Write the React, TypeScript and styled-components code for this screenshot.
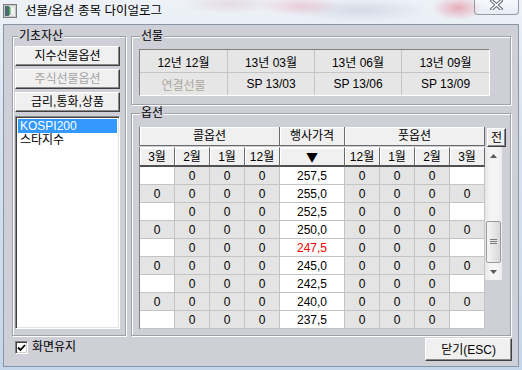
import styled, { createGlobalStyle } from "styled-components";

const FONT = `"Liberation Sans", "Noto Sans CJK KR", sans-serif`;
const FACE = "#cfcfd7";
const BUTTON_FACE = "#f0f0f0";

const GlobalStyle = createGlobalStyle`
  html, body {
    margin: 0;
    padding: 0;
  }
  body {
    width: 522px;
    height: 370px;
    overflow: hidden;
    font-family: ${FONT};
    font-size: 12px;
    color: #000;
  }
`;

const Window = styled.div`
  width: 522px;
  height: 370px;
  box-sizing: border-box;
  display: flex;
  flex-direction: column;
  padding: 0 3px 3px 3px;
  background:
    radial-gradient(ellipse 26px 12px at 458px 8px, rgba(225, 90, 110, 0.45), transparent),
    radial-gradient(ellipse 40px 10px at 300px 6px, rgba(230, 120, 140, 0.3), transparent),
    radial-gradient(ellipse 70px 12px at 360px 10px, rgba(140, 150, 175, 0.25), transparent),
    radial-gradient(ellipse 50px 10px at 230px 4px, rgba(200, 150, 170, 0.25), transparent),
    linear-gradient(#eef2f8, #dae4f0 30%, #c6d6ea);
`;

const TitleBar = styled.div`
  height: 24px;
  display: flex;
  align-items: flex-start;
`;

const AppIcon = styled.svg`
  margin-top: 4px;
  flex: none;
`;

const TitleText = styled.span`
  margin-left: 8px;
  line-height: 23px;
  font-size: 12.5px;
  color: #000;
`;

const CloseButton = styled.div`
  margin-left: auto;
  width: 45px;
  height: 15px;
  box-sizing: border-box;
  border: 1px solid rgba(70, 80, 100, 0.55);
  border-top: none;
  border-radius: 0 0 4px 4px;
  background: linear-gradient(rgba(255, 255, 255, 0.55), rgba(225, 232, 242, 0.35));
  display: flex;
  justify-content: center;
  align-items: flex-start;
`;

const Client = styled.div`
  flex: 1;
  display: flex;
  flex-direction: column;
  background: ${FACE};
  border: 1px solid #8a96a6;
  padding: 11px 6px 0 8px;
`;

const MainRow = styled.div`
  display: flex;
  gap: 5px;
  height: 300px;
`;

const GroupBox = styled.div`
  position: relative;
  box-sizing: border-box;
  border: 1px solid #a0a0a8;
  box-shadow: inset 1px 1px 0 #fff, 1px 1px 0 #fff;
`;

const GroupTitle = styled.span<{ $left: number }>`
  position: absolute;
  top: -8px;
  left: ${(p) => p.$left}px;
  padding: 0 1px;
  background: ${FACE};
  line-height: 14px;
`;

const AssetGroup = styled(GroupBox)`
  width: 114px;
  display: flex;
  flex-direction: column;
  gap: 3px;
  padding: 9px 5px 6px 2px;
`;

const RightColumn = styled.div`
  width: 380px;
  display: flex;
  flex-direction: column;
  gap: 8px;
`;

const FuturesGroup = styled(GroupBox)`
  height: 69px;
  padding: 12px 0 0 7px;
`;

const OptionsGroup = styled(GroupBox)`
  flex: 1;
  padding: 13px 0 0 7px;
`;

const PushButton = styled.button<{ $dim?: boolean; $w?: number; $h?: number }>`
  width: ${(p) => (p.$w ? `${p.$w}px` : "100%")};
  height: ${(p) => p.$h ?? 20}px;
  box-sizing: border-box;
  padding: 0;
  font-family: ${FONT};
  font-size: 12px;
  line-height: 16px;
  background: ${BUTTON_FACE};
  border: 1px solid;
  border-color: #fff #404040 #404040 #fff;
  box-shadow: inset -1px -1px 0 #8a8a8a;
  color: ${(p) => (p.$dim ? "#a4a4a4" : "#000")};
`;

const ListBox = styled.div`
  flex: 1;
  margin-top: 1px;
  background: #fff;
  border: 1px solid;
  border-color: #8a8a8a #fff #fff #8a8a8a;
  box-shadow: inset 1px 1px 0 #404040, inset -1px -1px 0 #e4e4e4;
  padding: 2px;
`;

const ListItem = styled.div<{ $selected?: boolean }>`
  height: 14px;
  line-height: 14px;
  padding-left: 2px;
  background: ${(p) => (p.$selected ? "#3399ff" : "transparent")};
  color: ${(p) => (p.$selected ? "#fff" : "#000")};
`;

const FuturesTable = styled.div`
  display: inline-grid;
  grid-template-columns: 87px 86px 86px 87px;
  grid-auto-rows: 22px;
  gap: 1px;
  background: #c4c4c4;
  border: 1px solid;
  border-color: #808080 #fff #fff #808080;
`;

const FuturesCell = styled.div<{ $muted?: boolean }>`
  background: #e6e6e6;
  display: flex;
  align-items: center;
  justify-content: center;
  color: ${(p) => (p.$muted ? "#aaa69c" : "#000")};
`;

const OptionsArea = styled.div`
  display: flex;
  flex-direction: column;
`;

const AreaRow = styled.div`
  display: flex;
  align-items: flex-start;
`;

const OptionGrid = styled.div<{ $top?: boolean }>`
  display: grid;
  grid-template-columns: ${(p) =>
    p.$top ? "140px 65px 140px" : "repeat(4, 35px) 65px repeat(4, 35px)"};
  border-left: 1px solid #808080;
`;

const HeadCell = styled.div<{ $second?: boolean }>`
  box-sizing: border-box;
  height: ${(p) => (p.$second ? 20 : 19)}px;
  background: ${BUTTON_FACE};
  border-right: 1px solid #6a6a6a;
  border-top: ${(p) => (p.$second ? "1px solid #fafafa" : "none")};
  border-bottom: ${(p) => (p.$second ? "2px solid #505050" : "1px solid #6a6a6a")};
  box-shadow: inset 1px 1px 0 #fff;
  display: flex;
  align-items: center;
  justify-content: center;
  line-height: 14px;
`;

const SortMark = styled.span`
  font-family: "Noto Sans CJK KR", sans-serif;
  font-size: 12px;
  line-height: 14px;
`;

const DataCell = styled.div<{ $fill: boolean; $red?: boolean }>`
  box-sizing: border-box;
  height: 18px;
  background: ${(p) => (p.$fill ? "#e4e4e4" : "#fff")};
  border-right: 1px solid #c4c4c4;
  border-bottom: 1px solid #c4c4c4;
  display: flex;
  align-items: center;
  justify-content: center;
  color: ${(p) => (p.$red ? "#ff0000" : "#000")};
  line-height: 14px;
`;

const AllButton = styled(PushButton)`
  margin: 1px 0 0 2px;
  width: 19px;
  height: 19px;
  line-height: 14px;
`;

const ScrollBar = styled.div`
  width: 17px;
  display: flex;
  flex-direction: column;
  background: linear-gradient(to right, #e6e6e9, #f4f4f5 30%, #f4f4f5 70%, #ececee);
`;

const ScrollArrow = styled.div`
  height: 17px;
  display: flex;
  align-items: center;
  justify-content: center;
`;

const ScrollTrack = styled.div`
  flex: 1;
`;

const ScrollThumb = styled.div`
  margin: 0 auto;
  width: 15px;
  height: 42px;
  box-sizing: border-box;
  border: 1px solid #9a9a9e;
  border-radius: 2px;
  background: linear-gradient(to right, #f6f6f6, #e8e8e8 50%, #d8d8da);
  display: flex;
  align-items: center;
  justify-content: center;
`;

const Footer = styled.div`
  flex: 1;
  display: flex;
  align-items: flex-start;
  padding: 2px 0 0 3px;
`;

const CheckLabel = styled.label`
  display: flex;
  align-items: center;
  gap: 4px;
  margin-top: 3px;
  line-height: 13px;
`;

const CheckBox = styled.span`
  width: 13px;
  height: 13px;
  box-sizing: border-box;
  background: #fff;
  border: 1px solid;
  border-color: #808080 #fff #fff #808080;
  box-shadow: inset 1px 1px 0 #404040, inset -1px -1px 0 #d4d0c8;
  display: flex;
  align-items: center;
  justify-content: center;
`;

const CloseDialogButton = styled(PushButton)`
  margin-left: auto;
  line-height: 20px;
`;

const futures = [
  ["12년 12월", "13년 03월", "13년 06월", "13년 09월"],
  ["연결선물", "SP 13/03", "SP 13/06", "SP 13/09"],
];

const months = ["3월", "2월", "1월", "12월", "▼", "12월", "1월", "2월", "3월"];
const strikes = ["257,5", "255,0", "252,5", "250,0", "247,5", "245,0", "242,5", "240,0", "237,5"];
const atm = "247,5";

export default function App() {
  return (
    <>
      <GlobalStyle />
      <Window>
        <TitleBar>
          <AppIcon width="14" height="14" viewBox="0 0 14 14">
            <rect x="0.5" y="0.5" width="13" height="13" fill="#c8c8c8" stroke="#7a7a7a" />
            <rect x="2" y="2" width="10" height="10" fill="#e8e8e8" />
            <rect x="2" y="2" width="4" height="10" fill="#4c6a74" />
            <rect x="6" y="3" width="1.5" height="8" fill="#4caf50" />
            <rect x="8" y="4" width="3" height="6" fill="#f4f4f4" />
          </AppIcon>
          <TitleText>선물/옵션 종목 다이얼로그</TitleText>
          <CloseButton>
            <svg width="13" height="10" viewBox="0 0 13 10">
              <path d="M2 1 L11 9 M11 1 L2 9" stroke="#4a5262" strokeWidth="3.2" strokeLinecap="square" />
              <path d="M2 1 L11 9 M11 1 L2 9" stroke="#fff" strokeWidth="1.6" strokeLinecap="square" />
            </svg>
          </CloseButton>
        </TitleBar>
        <Client>
          <MainRow>
            <AssetGroup>
              <GroupTitle $left={5}>기초자산</GroupTitle>
              <PushButton>지수선물옵션</PushButton>
              <PushButton $dim>주식선물옵션</PushButton>
              <PushButton>금리,통화,상품</PushButton>
              <ListBox>
                <ListItem $selected>KOSPI200</ListItem>
                <ListItem>스타지수</ListItem>
              </ListBox>
            </AssetGroup>
            <RightColumn>
              <FuturesGroup>
                <GroupTitle $left={8}>선물</GroupTitle>
                <FuturesTable>
                  {futures.flatMap((row, r) =>
                    row.map((text, c) => (
                      <FuturesCell key={`${r}-${c}`} $muted={r === 1 && c === 0}>
                        {text}
                      </FuturesCell>
                    )),
                  )}
                </FuturesTable>
              </FuturesGroup>
              <OptionsGroup>
                <GroupTitle $left={8}>옵션</GroupTitle>
                <OptionsArea>
                  <AreaRow>
                    <OptionGrid $top>
                      <HeadCell>콜옵션</HeadCell>
                      <HeadCell>행사가격</HeadCell>
                      <HeadCell>풋옵션</HeadCell>
                    </OptionGrid>
                    <AllButton>전</AllButton>
                  </AreaRow>
                  <AreaRow>
                    <OptionGrid>
                      {months.map((m, i) => (
                        <HeadCell key={`h${i}`} $second>
                          {i === 4 ? <SortMark>{m}</SortMark> : m}
                        </HeadCell>
                      ))}
                      {strikes.flatMap((price, r) => {
                        const hasMarch = r % 2 === 1;
                        return months.map((_, c) => {
                          if (c === 4) {
                            return (
                              <DataCell key={`${r}-${c}`} $fill={false} $red={price === atm}>
                                {price}
                              </DataCell>
                            );
                          }
                          const edge = c === 0 || c === 8;
                          const show = !edge || hasMarch;
                          return (
                            <DataCell key={`${r}-${c}`} $fill={show}>
                              {show ? "0" : ""}
                            </DataCell>
                          );
                        });
                      })}
                    </OptionGrid>
                    <ScrollBar>
                      <ScrollArrow>
                        <svg width="7" height="4" viewBox="0 0 7 4">
                          <path d="M0 4 L3.5 0 L7 4 Z" fill="#5a5a5e" />
                        </svg>
                      </ScrollArrow>
                      <ScrollTrack>
                        <ScrollThumb style={{ marginTop: 57 }}>
                          <svg width="7" height="6" viewBox="0 0 7 6">
                            <path d="M0 0.5 H7 M0 2.5 H7 M0 4.5 H7" stroke="#7a7a7e" strokeWidth="1" />
                          </svg>
                        </ScrollThumb>
                      </ScrollTrack>
                      <ScrollArrow>
                        <svg width="7" height="4" viewBox="0 0 7 4">
                          <path d="M0 0 L3.5 4 L7 0 Z" fill="#5a5a5e" />
                        </svg>
                      </ScrollArrow>
                    </ScrollBar>
                  </AreaRow>
                </OptionsArea>
              </OptionsGroup>
            </RightColumn>
          </MainRow>
          <Footer>
            <CheckLabel>
              <CheckBox>
                <svg width="9" height="8" viewBox="0 0 9 8">
                  <path d="M1 3.5 L3.5 6 L8 1" stroke="#000" strokeWidth="1.8" fill="none" />
                </svg>
              </CheckBox>
              화면유지
            </CheckLabel>
            <CloseDialogButton $w={87} $h={23}>
              닫기(ESC)
            </CloseDialogButton>
          </Footer>
        </Client>
      </Window>
    </>
  );
}
